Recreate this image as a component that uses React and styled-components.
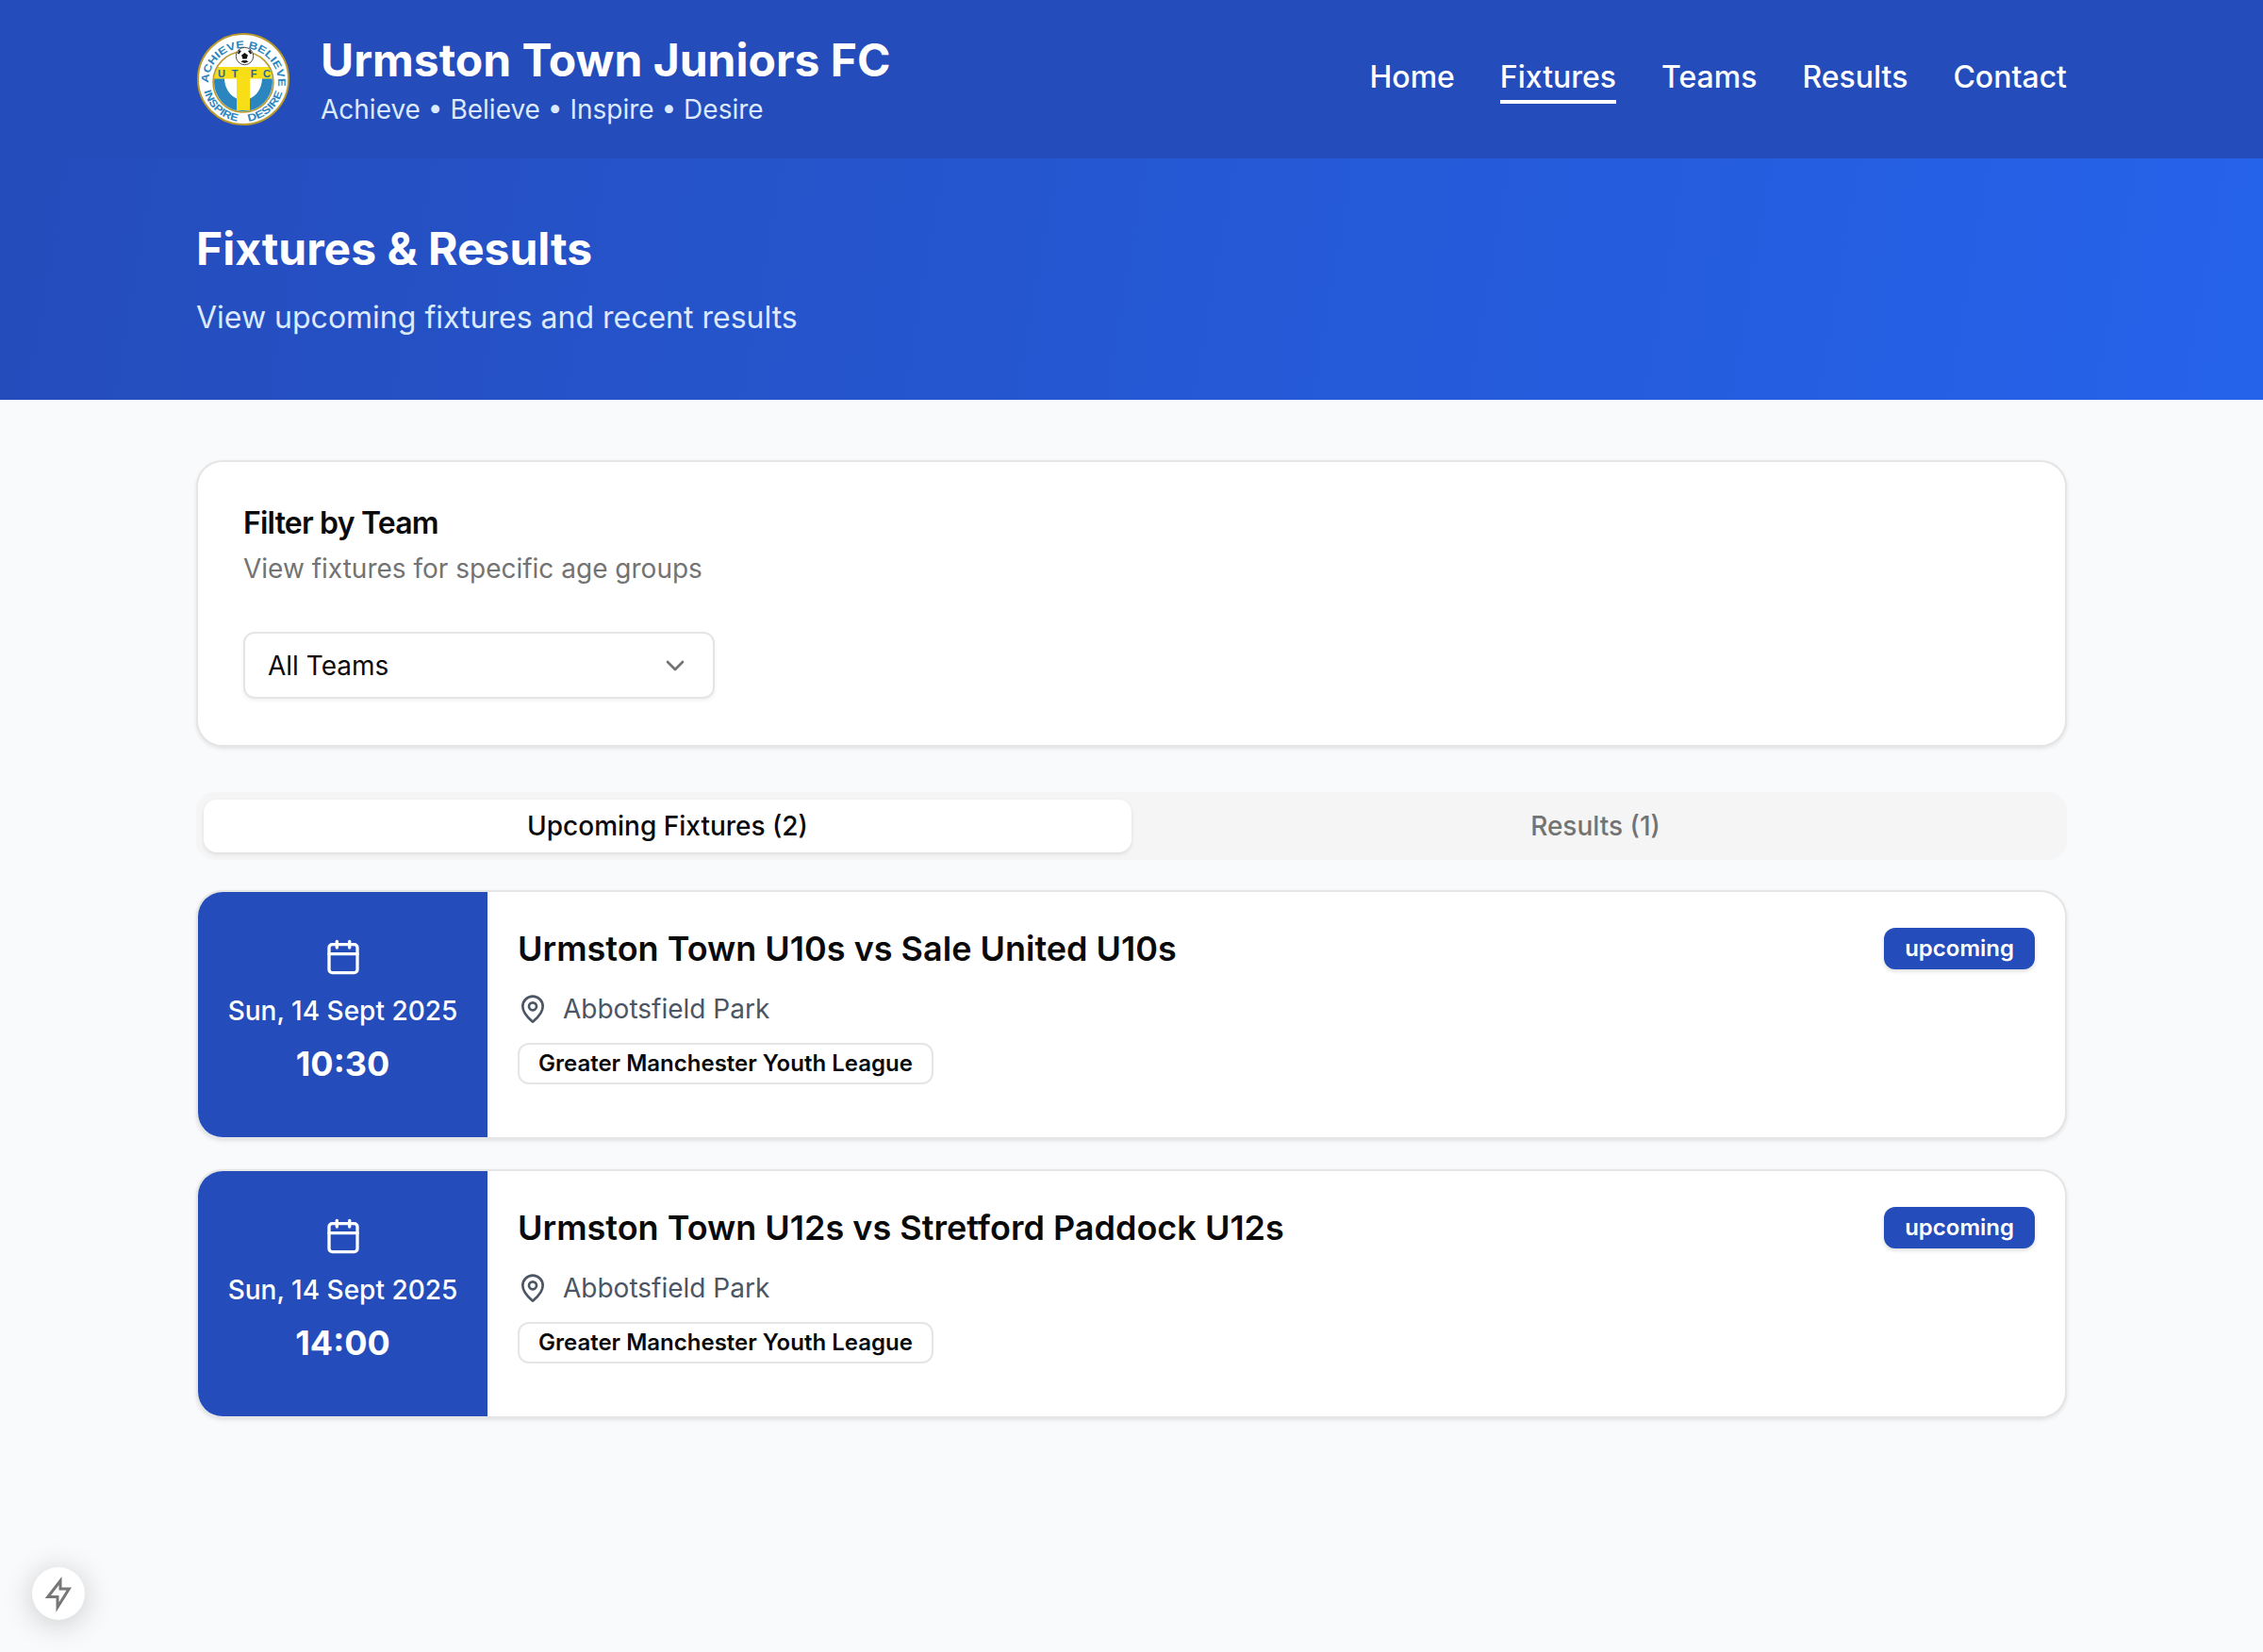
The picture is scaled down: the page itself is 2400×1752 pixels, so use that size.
import React from "react";
import styled, { createGlobalStyle } from "styled-components";
import { Calendar, ChevronDown, MapPin } from "lucide-react";

const GlobalStyle = createGlobalStyle`
	* {
		box-sizing: border-box;
	}
	body {
		margin: 0;
		background: #f9fafb;
		font-family: Inter, "Liberation Sans", sans-serif;
		color: #0a0a0a;
	}
`;

const Page = styled.div`
	position: relative;
	min-height: 1752px;
	background: #f9fafb;
`;

const Header = styled.header`
	height: 168px;
	background: #254cbb;
`;

const Inner = styled.div`
	width: 1984px;
	margin: 0 auto;
`;

const HeaderRow = styled(Inner)`
	height: 100%;
	display: flex;
	align-items: center;
	justify-content: space-between;
`;

const Brand = styled.div`
	display: flex;
	align-items: center;
	gap: 32px;
`;

const BrandText = styled.div`
	padding-top: 4px;
`;

const BrandName = styled.h1`
	margin: 0;
	font-size: 48px;
	line-height: 56px;
	font-weight: 700;
	color: #fff;
`;

const Motto = styled.p`
	margin: 4px 0 0;
	font-size: 28px;
	line-height: 40px;
	color: #dbeafe;
`;

const Nav = styled.nav`
	display: flex;
	gap: 48px;
`;

const NavLink = styled.a`
	font-size: 32px;
	line-height: 48px;
	font-weight: 500;
	color: #fff;
	border-bottom: 4px solid ${(p) => (p.$active ? "#fff" : "transparent")};
`;

const Hero = styled.section`
	height: 256px;
	padding-top: 5px;
	background: linear-gradient(100deg, #254cbb 0%, #2563eb 100%);
	display: flex;
	align-items: center;
`;

const HeroTitle = styled.h2`
	margin: 0 0 21px;
	font-size: 48px;
	line-height: 56px;
	font-weight: 700;
	color: #fff;
`;

const HeroText = styled.p`
	margin: 0;
	font-size: 32px;
	line-height: 48px;
	color: #dbeafe;
`;

const Main = styled(Inner)`
	padding-top: 64px;
`;

const Card = styled.div`
	background: #fff;
	border: 2px solid #e5e5e5;
	border-radius: 28px;
	box-shadow: 0 2px 4px rgba(0, 0, 0, 0.1);
`;

const FilterCard = styled(Card)`
	height: 304px;
	padding: 45px 48px;
`;

const FilterTitle = styled.h3`
	margin: 0;
	font-size: 32px;
	line-height: 40px;
	font-weight: 600;
	letter-spacing: -0.8px;
`;

const FilterText = styled.p`
	margin: 8px 0 0;
	font-size: 28px;
	line-height: 40px;
	color: #737373;
`;

const Select = styled.div`
	width: 500px;
	height: 71px;
	margin-top: 47px;
	padding: 0 24px;
	display: flex;
	align-items: center;
	justify-content: space-between;
	font-size: 28px;
	background: #fff;
	border: 2px solid #e5e5e5;
	border-radius: 12px;
	box-shadow: 0 2px 4px rgba(0, 0, 0, 0.06);
	svg {
		color: #737373;
	}
`;

const Tabs = styled.div`
	display: grid;
	grid-template-columns: 1fr 1fr;
	height: 72px;
	margin-top: 48px;
	padding: 8px;
	background: #f5f5f5;
	border-radius: 20px;
`;

const Tab = styled.div`
	display: flex;
	align-items: center;
	justify-content: center;
	font-size: 28px;
	font-weight: 500;
	border-radius: 14px;
	color: ${(p) => (p.$active ? "#0a0a0a" : "#737373")};
	background: ${(p) => (p.$active ? "#fff" : "transparent")};
	box-shadow: ${(p) => (p.$active ? "0 2px 4px rgba(0, 0, 0, 0.1)" : "none")};
`;

const FixtureList = styled.div`
	display: flex;
	flex-direction: column;
	gap: 32px;
	margin-top: 32px;
`;

const FixtureCard = styled(Card)`
	display: flex;
	height: 264px;
	overflow: hidden;
`;

const DateBlock = styled.div`
	width: 307px;
	flex-shrink: 0;
	padding-bottom: 5px;
	display: flex;
	flex-direction: column;
	align-items: center;
	justify-content: center;
	color: #fff;
	background: #254cbb;
`;

const DateText = styled.div`
	margin-top: 17px;
	font-size: 28px;
	line-height: 40px;
	font-weight: 500;
`;

const TimeText = styled.div`
	margin-top: 12px;
	font-size: 36px;
	line-height: 48px;
	font-weight: 700;
`;

const FixtureBody = styled.div`
	flex: 1;
	padding: 32px;
	display: flex;
	justify-content: space-between;
	align-items: flex-start;
`;

const MatchTitle = styled.h4`
	margin: 0;
	font-size: 36px;
	line-height: 56px;
	font-weight: 600;
`;

const Venue = styled.div`
	display: flex;
	align-items: center;
	gap: 16px;
	margin-top: 12px;
	font-size: 28px;
	line-height: 48px;
	color: #4b5563;
`;

const League = styled.span`
	display: inline-block;
	margin-top: 12px;
	padding: 4px 20px;
	font-size: 24px;
	line-height: 32px;
	font-weight: 600;
	border: 2px solid #e5e5e5;
	border-radius: 12px;
`;

const Status = styled.span`
	margin-top: 6px;
	padding: 6px 22px;
	font-size: 24px;
	line-height: 32px;
	font-weight: 600;
	color: #fff;
	background: #254cbb;
	border-radius: 12px;
	box-shadow: 0 2px 4px rgba(0, 0, 0, 0.15);
`;

const DevButton = styled.button`
	position: absolute;
	left: 34px;
	top: 1662px;
	width: 56px;
	height: 56px;
	display: flex;
	align-items: center;
	justify-content: center;
	padding: 0;
	background: #fff;
	border: none;
	border-radius: 50%;
	box-shadow: 0 4px 32px rgba(0, 0, 0, 0.2);
`;

const ArcText = styled.text`
	font-family: "Liberation Sans", sans-serif;
	font-weight: 700;
	font-size: 11px;
	fill: #2b86bf;
`;

const CrestLetter = styled.text`
	font-family: "Liberation Sans", sans-serif;
	font-weight: 700;
	font-size: 11px;
	fill: #1d6c94;
	text-anchor: middle;
`;

const Crest = () => (
	<svg width="100" height="100" viewBox="0 0 100 100">
		<defs>
			<path id="arcTop" d="M 13 54 A 37 37 0 1 1 87 54" />
			<path id="arcBottom" d="M 7 52 A 43 43 0 0 0 93 52" />
			<clipPath id="innerClip">
				<circle cx="50" cy="53" r="31" />
			</clipPath>
		</defs>
		<circle cx="50" cy="50" r="48" fill="#fff" stroke="#b99a2b" strokeWidth="2" />
		<ArcText textLength="120" lengthAdjust="spacingAndGlyphs">
			<textPath href="#arcTop">ACHIEVE BELIEVE</textPath>
		</ArcText>
		<ArcText textLength="50" lengthAdjust="spacingAndGlyphs">
			<textPath href="#arcBottom" startOffset="11">INSPIRE</textPath>
		</ArcText>
		<ArcText textLength="50" lengthAdjust="spacingAndGlyphs">
			<textPath href="#arcBottom" startOffset="73">DESIRE</textPath>
		</ArcText>
		<circle cx="50" cy="53" r="32" fill="#fff" stroke="#b99a2b" strokeWidth="1.6" />
		<g clipPath="url(#innerClip)">
			<rect x="18" y="37" width="64" height="50" fill="#2b86bf" />
			<ellipse cx="50" cy="49" rx="20" ry="23" fill="#fff" />
			<rect x="18" y="37" width="64" height="12.5" fill="#f7de17" />
			<rect x="43" y="37" width="14" height="46" fill="#f7de17" />
		</g>
		<CrestLetter x="27" y="47.5">U</CrestLetter>
		<CrestLetter x="41" y="47.5">T</CrestLetter>
		<CrestLetter x="61" y="47.5">F</CrestLetter>
		<CrestLetter x="75" y="47.5">C</CrestLetter>
		<circle cx="51.5" cy="25.5" r="9.2" fill="#fff" stroke="#222" strokeWidth="0.8" />
		<path d="M51.5 22l3.4 2.5-1.3 4h-4.2l-1.3-4z" fill="#111" />
		<path d="M45.5 19l2.5 1-2.5 3.5-1.6-1zM57.5 19l-2.5 1 2.5 3.5 1.6-1zM47.5 31.5l2-1.5h4l2 1.5-4 1.6z" fill="#222" />
	</svg>
);

const Bolt = () => (
	<svg width="44" height="40" viewBox="0 0 44 40" fill="none">
		<path d="M24 6.5 10.8 23.5H21V34.5L33.2 15H24z" stroke="#777" strokeWidth="3" />
	</svg>
);

const fixtures = [
	{ title: "Urmston Town U10s vs Sale United U10s", time: "10:30" },
	{ title: "Urmston Town U12s vs Stretford Paddock U12s", time: "14:00" },
];

const navItems = ["Home", "Fixtures", "Teams", "Results", "Contact"];

const App = () => {
	return (
		<Page>
			<GlobalStyle />
			<Header>
				<HeaderRow>
					<Brand>
						<Crest />
						<BrandText>
							<BrandName>Urmston Town Juniors FC</BrandName>
							<Motto>Achieve • Believe • Inspire • Desire</Motto>
						</BrandText>
					</Brand>
					<Nav>
						{navItems.map((item) => (
							<NavLink key={item} $active={item === "Fixtures"}>
								{item}
							</NavLink>
						))}
					</Nav>
				</HeaderRow>
			</Header>
			<Hero>
				<Inner>
					<HeroTitle>Fixtures &amp; Results</HeroTitle>
					<HeroText>View upcoming fixtures and recent results</HeroText>
				</Inner>
			</Hero>
			<Main>
				<FilterCard>
					<FilterTitle>Filter by Team</FilterTitle>
					<FilterText>View fixtures for specific age groups</FilterText>
					<Select>
						All Teams
						<ChevronDown size={32} strokeWidth={2} />
					</Select>
				</FilterCard>
				<Tabs>
					<Tab $active>Upcoming Fixtures (2)</Tab>
					<Tab>Results (1)</Tab>
				</Tabs>
				<FixtureList>
					{fixtures.map((f) => (
						<FixtureCard key={f.time}>
							<DateBlock>
								<Calendar size={40} strokeWidth={2} />
								<DateText>Sun, 14 Sept 2025</DateText>
								<TimeText>{f.time}</TimeText>
							</DateBlock>
							<FixtureBody>
								<div>
									<MatchTitle>{f.title}</MatchTitle>
									<Venue>
										<MapPin size={32} strokeWidth={2} />
										Abbotsfield Park
									</Venue>
									<League>Greater Manchester Youth League</League>
								</div>
								<Status>upcoming</Status>
							</FixtureBody>
						</FixtureCard>
					))}
				</FixtureList>
			</Main>
			<DevButton>
				<Bolt />
			</DevButton>
		</Page>
	);
};

export default App;
